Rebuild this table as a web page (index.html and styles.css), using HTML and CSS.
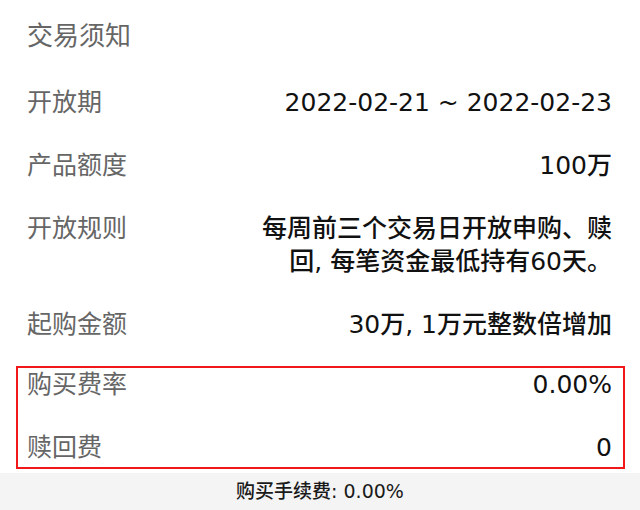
FILE: index.html
```html
<!DOCTYPE html>
<html lang="zh-CN">
<head>
<meta charset="utf-8">
<link rel="stylesheet" href="styles.css">
</head>
<body>
<div class="page">
  <div class="title">交易须知</div>
  <div class="rows">
    <div class="row"><div class="label">开放期</div><div class="value">2022-02-21 ~ 2022-02-23</div></div>
    <div class="row"><div class="label">产品额度</div><div class="value">100万</div></div>
    <div class="row"><div class="label">开放规则</div><div class="value wrap">每周前三个交易日开放申购、赎回, 每笔资金最低持有60天。</div></div>
    <div class="row"><div class="label">起购金额</div><div class="value">30万, 1万元整数倍增加</div></div>
  </div>
  <div class="box">
    <div class="row"><div class="label">购买费率</div><div class="value">0.00%</div></div>
    <div class="row"><div class="label">赎回费</div><div class="value">0</div></div>
  </div>
</div>
<div class="footer">购买手续费: 0.00%</div>
</body>
</html>
```
FILE: styles.css
```css
html, body {
  margin: 0;
  padding: 0;
  background: #ffffff;
}
body {
  width: 640px;
  height: 510px;
  overflow: hidden;
  font-family: "DejaVu Sans", "Noto Sans CJK SC", sans-serif;
  font-size: 25px;
  line-height: 33px;
}
.page {
  padding: 20px 28px 0 27px;
}
.title {
  color: #666666;
  font-size: 26px;
  margin-bottom: 33px;
}
.rows {
  display: flex;
  flex-direction: column;
  gap: 30px;
}
.row {
  display: flex;
  justify-content: space-between;
  align-items: flex-start;
}
.label {
  color: #666666;
  white-space: nowrap;
}
.value {
  color: #111111;
  text-align: right;
  font-weight: 500;
}
.wrap {
  width: 352px;
}
.box {
  margin: 25px -13px 0 -11px;
  border: 2px solid #f01818;
  padding: 0 11px 3px 9px;
  display: flex;
  flex-direction: column;
  gap: 30px;
}
.footer {
  margin-top: 4px;
  height: 37px;
  background: #f4f4f4;
  color: #1a1a1a;
  font-size: 19px;
  font-weight: 500;
  line-height: 37px;
  text-align: center;
}
```
